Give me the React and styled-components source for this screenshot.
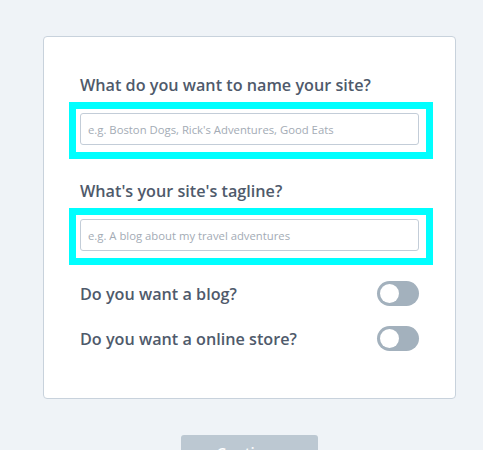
import React from 'react'
import styled, { createGlobalStyle } from 'styled-components';

const GlobalStyle = createGlobalStyle`
  body {
    margin: 0;
    background: #eff3f7;
    font-family: "Open Sans", Lato, sans-serif;
  }
`;

const Page = styled.div`
  padding-top: 36px;
  margin-left: 43px;
  width: 413px;
  display: flex;
  flex-direction: column;
  align-items: center;
`;

const Card = styled.div`
  box-sizing: border-box;
  width: 100%;
  background: #fff;
  border: 1.5px solid #c8d2dc;
  border-radius: 4px;
  padding: 36px 36px 47px;
`;

const Label = styled.div`
  font-size: 16.2px;
  font-weight: 600;
  color: #4f5a6b;
  line-height: 24px;
  margin-top: ${props => props.first ? '0' : '20px'};
`;

const Highlight = styled.div`
  margin: 5px -14px 0 -11px;
  border: 7px solid #00ffff;
  padding: 4px 7px 7px 4px;
`;

const Input = styled.input`
  box-sizing: border-box;
  display: block;
  width: 100%;
  height: 32px;
  border: 1px solid #c3cdd8;
  border-radius: 3px;
  padding: 0 7px;
  font-family: "Open Sans", sans-serif;
  font-size: 11.3px;
  color: #4f5a6b;
  outline: none;
  &::placeholder {
    color: #a3abb5;
  }
`;

const ToggleRow = styled.div`
  display: flex;
  align-items: center;
  justify-content: space-between;
  height: 25px;
  margin-top: ${props => props.first ? '16px' : '20px'};
`;

const RowLabel = styled(Label)`
  margin-top: 0;
`;

const Switch = styled.div`
  position: relative;
  width: 42px;
  height: 25px;
  border-radius: 13px;
  background: #a3b1bd;
  &::after {
    content: '';
    position: absolute;
    left: 3px;
    top: 3px;
    width: 19px;
    height: 19px;
    border-radius: 50%;
    background: #fff;
  }
`;

const Button = styled.button`
  margin-top: 36px;
  width: 137px;
  height: 40px;
  border: none;
  border-radius: 3px;
  background: #bcc8d2;
  color: #fff;
  font-family: "Open Sans", sans-serif;
  font-size: 15px;
  font-weight: 600;
  padding: 0 0 7px;
`;

export default function App() {
  return (
    <>
      <GlobalStyle />
      <Page>
        <Card>
          <Label first>What do you want to name your site?</Label>
          <Highlight>
            <Input placeholder="e.g. Boston Dogs, Rick's Adventures, Good Eats" />
          </Highlight>
          <Label>What's your site's tagline?</Label>
          <Highlight>
            <Input placeholder="e.g. A blog about my travel adventures" />
          </Highlight>
          <ToggleRow first>
            <RowLabel>Do you want a blog?</RowLabel>
            <Switch />
          </ToggleRow>
          <ToggleRow>
            <RowLabel>Do you want a online store?</RowLabel>
            <Switch />
          </ToggleRow>
        </Card>
        <Button>Continue</Button>
      </Page>
    </>
  )
}
